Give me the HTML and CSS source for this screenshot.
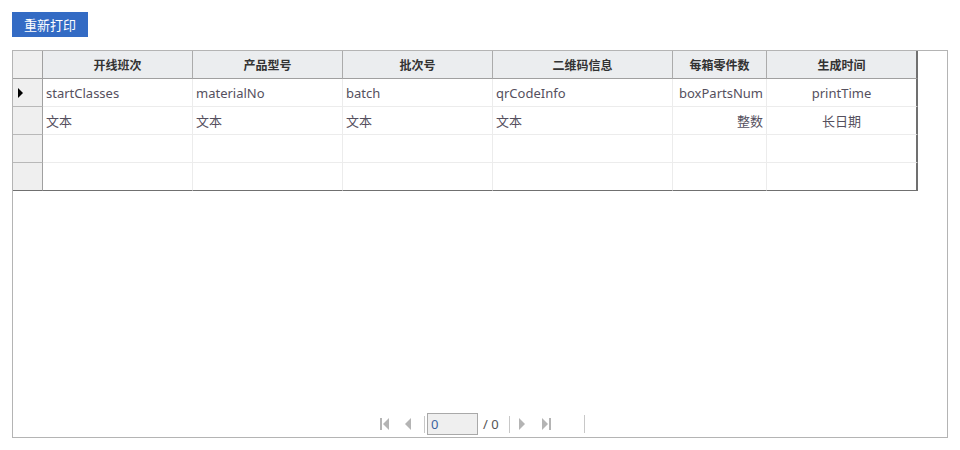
FILE: index.html
```html
<!DOCTYPE html>
<html lang="zh">
<head>
<meta charset="utf-8">
<link rel="stylesheet" href="styles.css">
</head>
<body>
<div class="toolbar"><button class="btn">重新打印</button></div>
<div class="panel">
  <div class="grid">
    <div class="rh hd"></div>
    <div class="hd">开线班次</div>
    <div class="hd">产品型号</div>
    <div class="hd">批次号</div>
    <div class="hd">二维码信息</div>
    <div class="hd">每箱零件数</div>
    <div class="hd last">生成时间</div>

    <div class="rh"><span class="arrow"></span></div>
    <div class="c">startClasses</div>
    <div class="c">materialNo</div>
    <div class="c">batch</div>
    <div class="c">qrCodeInfo</div>
    <div class="c right">boxPartsNum</div>
    <div class="c center last">printTime</div>

    <div class="rh"></div>
    <div class="c">文本</div>
    <div class="c">文本</div>
    <div class="c">文本</div>
    <div class="c">文本</div>
    <div class="c right">整数</div>
    <div class="c center last">长日期</div>

    <div class="rh"></div>
    <div class="c"></div><div class="c"></div><div class="c"></div><div class="c"></div><div class="c"></div><div class="c last"></div>

    <div class="rh end"></div>
    <div class="c end"></div><div class="c end"></div><div class="c end"></div><div class="c end"></div><div class="c end"></div><div class="c end last"></div>
  </div>
  <div class="pager">
    <svg class="ic first" width="10" height="12" viewBox="0 0 10 12"><rect x="0" y="0" width="2" height="12"/><path d="M9 0 L3 6 L9 12 Z"/></svg>
    <svg class="ic prev" width="7" height="12" viewBox="0 0 7 12"><path d="M6 0 L0 6 L6 12 Z"/></svg>
    <span class="sep"></span>
    <div class="pinput">0</div>
    <span class="total">/ 0</span>
    <span class="sep"></span>
    <svg class="ic next" width="7" height="12" viewBox="0 0 7 12"><path d="M1 0 L7 6 L1 12 Z"/></svg>
    <svg class="ic last-ic" width="10" height="12" viewBox="0 0 10 12"><path d="M1 0 L7 6 L1 12 Z"/><rect x="8" y="0" width="2" height="12"/></svg>
    <span class="sep wide"></span>
  </div>
</div>
</body>
</html>
```
FILE: styles.css
```css
* { box-sizing: border-box; }
body {
  margin: 0;
  padding: 12px;
  background: #fff;
  font-family: "Noto Sans", "Noto Sans CJK SC", sans-serif;
  font-size: 12px;
  color: #444;
}
.toolbar { height: 38px; }
.btn {
  display: block;
  width: 76px;
  height: 25px;
  border: 0;
  padding: 0;
  background: #336bc4;
  color: #fff;
  font-family: "Noto Sans CJK SC", sans-serif;
  font-size: 13px;
}
.panel {
  width: 936px;
  height: 388px;
  border: 1px solid #b4b4b4;
  display: flex;
  flex-direction: column;
  justify-content: space-between;
}
.grid {
  display: grid;
  grid-template-columns: 30px 150px 150px 150px 180px 94px 151px;
  grid-auto-rows: 28px;
  width: 905px;
}
.grid > div {
  border-right: 1px solid #ececec;
  border-bottom: 1px solid #ececec;
  display: flex;
  align-items: center;
  white-space: nowrap;
  overflow: hidden;
}
.grid > .hd {
  background: #ebedef;
  border-right: 1px solid #ababab;
  border-bottom: 1px solid #a0a0a0;
  justify-content: center;
  font-family: "Noto Sans CJK SC", sans-serif;
  font-weight: bold;
  color: #333;
  font-size: 12px;
}
.grid > .rh {
  background: #efefef;
  border-right: 1px solid #a0a0a0;
  border-bottom: 1px solid #b8b8b8;
  justify-content: center;
}
.grid > .rh.hd { border-bottom-color: #a0a0a0; }
.grid > .last { border-right: 2px solid #707070; }
.grid > .end { border-bottom: 1px solid #707070; }
.c {
  padding: 0 3px;
  color: #55505e;
  font-size: 13px;
  font-family: "Noto Sans", "Noto Sans CJK SC", sans-serif;
}
.c.right { justify-content: flex-end; }
.c.center { justify-content: center; }
.arrow {
  width: 0; height: 0;
  border-top: 5px solid transparent;
  border-bottom: 5px solid transparent;
  border-left: 5px solid #000;
  margin-right: 14px;
}
.pager {
  height: 24px;
  margin-bottom: 1px;
  display: flex;
  align-items: center;
  padding-left: 367px;
}
.ic { fill: #b4b4b4; display: block; }
.first { margin-right: 15px; }
.prev { margin-right: 12px; }
.sep { width: 1px; height: 17px; background: #c8c8c8; }
.pinput {
  margin-left: 2px;
  width: 51px;
  height: 22px;
  border: 1px solid #a9a9a9;
  background: #efefef;
  color: #3c64a0;
  font-size: 13px;
  padding-left: 3px;
  line-height: 20px;
}
.total { margin: 0 10px 0 5px; color: #555; font-size: 13px; }
.next { margin-left: 8px; margin-right: 16px; }
.last-ic { margin-right: 33px; }
.sep.wide { height: 18px; }
```
